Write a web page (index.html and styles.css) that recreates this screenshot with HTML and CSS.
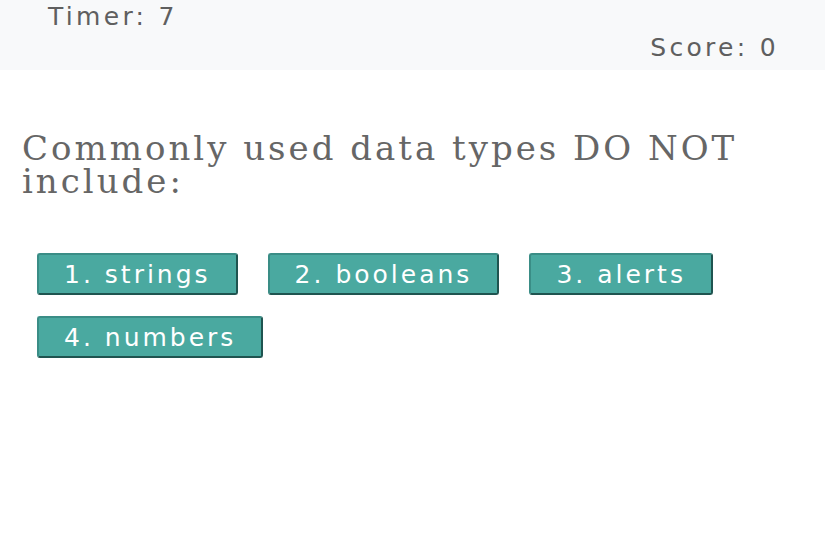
FILE: index.html
```html
<!DOCTYPE html>
<html lang="en">
<head>
<meta charset="utf-8">
<title>Code Quiz</title>
<link rel="stylesheet" href="styles.css">
</head>
<body>
<header class="topbar">
  <div class="timer">Timer: <span>7</span></div>
  <div class="score">Score: <span>0</span></div>
</header>
<main class="quiz">
  <h2 class="question">Commonly used data types DO NOT include:</h2>
  <div class="choices">
    <button class="choice">1. strings</button>
    <button class="choice">2. booleans</button>
    <button class="choice">3. alerts</button>
    <button class="choice">4. numbers</button>
  </div>
</main>
</body>
</html>
```
FILE: styles.css
```css
html, body {
  margin: 0;
  padding: 0;
  background: #ffffff;
}
body {
  font-family: "DejaVu Sans", "Liberation Sans", sans-serif;
}
.topbar {
  display: flex;
  flex-direction: column;
  box-sizing: border-box;
  height: 70px;
  padding: 1px 46px 0 48px;
  background: #f8f9fa;
  color: #5f5f5f;
  font-size: 25px;
  line-height: 31px;
  letter-spacing: 3.3px;
}
.score {
  align-self: flex-end;
}
.quiz {
  padding: 62px 0 0 22px;
}
.question {
  margin: 0;
  font-family: "DejaVu Serif", "Liberation Serif", serif;
  font-weight: normal;
  font-size: 34px;
  line-height: 33px;
  letter-spacing: 3px;
  color: #666666;
}
.choices {
  display: flex;
  flex-wrap: wrap;
  gap: 21px 30px;
  margin: 55px 0 0 15px;
}
.choice {
  box-sizing: border-box;
  height: 42px;
  padding: 0 25px;
  background: #4aa9a0;
  border: 2px solid #3a8d86;
  border-right-color: #1f5450;
  border-bottom-color: #1f5450;
  border-radius: 3px;
  color: #ffffff;
  font-family: "DejaVu Sans", "Liberation Sans", sans-serif;
  font-size: 25px;
  letter-spacing: 3px;
  cursor: pointer;
}
```
